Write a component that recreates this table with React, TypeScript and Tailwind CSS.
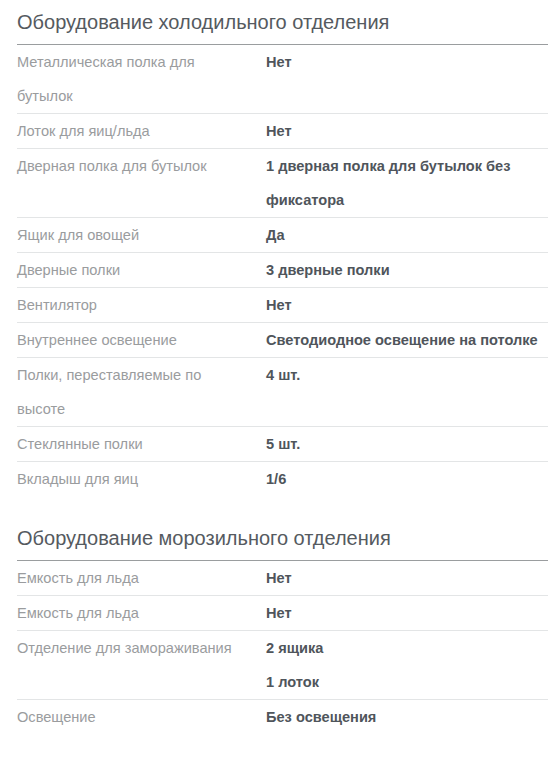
import React from 'react';

type Row = { label: string; values: string[] };

const fridge: Row[] = [
  { label: 'Металлическая полка для бутылок', values: ['Нет'] },
  { label: 'Лоток для яиц/льда', values: ['Нет'] },
  { label: 'Дверная полка для бутылок', values: ['1 дверная полка для бутылок без фиксатора'] },
  { label: 'Ящик для овощей', values: ['Да'] },
  { label: 'Дверные полки', values: ['3 дверные полки'] },
  { label: 'Вентилятор', values: ['Нет'] },
  { label: 'Внутреннее освещение', values: ['Светодиодное освещение на потолке'] },
  { label: 'Полки, переставляемые по высоте', values: ['4 шт.'] },
  { label: 'Стеклянные полки', values: ['5 шт.'] },
  { label: 'Вкладыш для яиц', values: ['1/6'] },
];

const freezer: Row[] = [
  { label: 'Емкость для льда', values: ['Нет'] },
  { label: 'Емкость для льда', values: ['Нет'] },
  { label: 'Отделение для замораживания', values: ['2 ящика', '1 лоток'] },
  { label: 'Освещение', values: ['Без освещения'] },
];

function Section({ title, rows }: { title: string; rows: Row[] }) {
  return (
    <section>
      <h2 className="text-[20px] leading-[28px] text-[#555a60] pt-2 pb-2 border-b border-[#9a9d9f]">
        {title}
      </h2>
      <dl>
        {rows.map((row, idx) => (
          <div
            key={idx}
            className="flex text-[14.6px] leading-[34px] border-b border-[#e3e5e6] last:border-0"
          >
            <dt className="w-[249px] shrink-0 pr-6 text-[#9a9c9e]">{row.label}</dt>
            <dd className="flex-1 font-bold text-[#4f555b]">
              {row.values.map((v, i) => (
                <div key={i}>{v}</div>
              ))}
            </dd>
          </div>
        ))}
      </dl>
    </section>
  );
}

export default function App() {
  return (
    <div className="min-h-[759px] bg-white pl-[17px] font-['Liberation_Sans',Arial,sans-serif]">
      <Section title="Оборудование холодильного отделения" rows={fridge} />
      <div className="mt-5">
        <Section title="Оборудование морозильного отделения" rows={freezer} />
      </div>
    </div>
  );
}
